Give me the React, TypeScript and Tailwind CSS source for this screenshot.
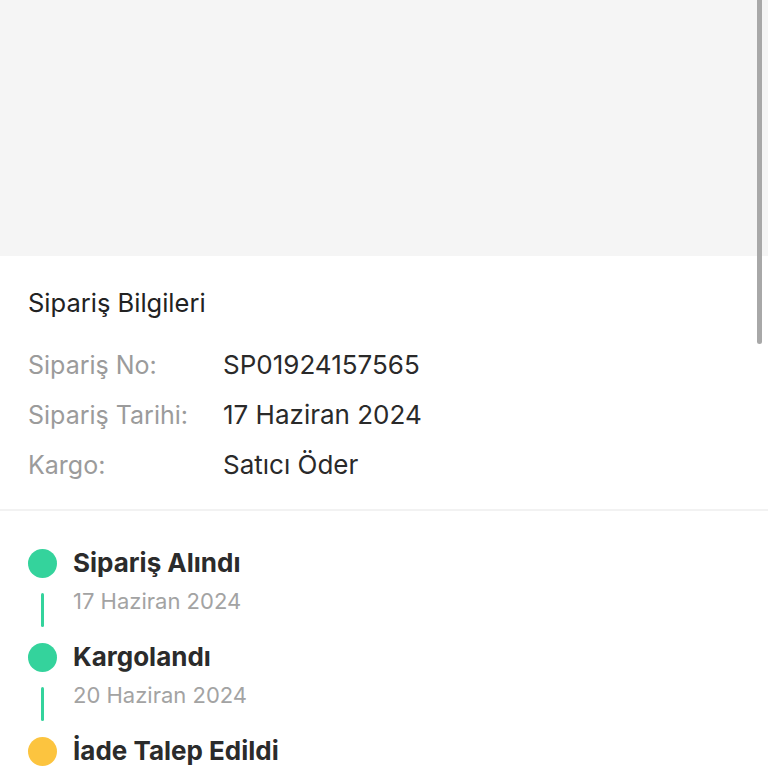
const rows = [
  { label: 'Sipariş No:', value: 'SP01924157565' },
  { label: 'Sipariş Tarihi:', value: '17 Haziran 2024' },
  { label: 'Kargo:', value: 'Satıcı Öder' },
];

const steps = [
  { title: 'Sipariş Alındı', date: '17 Haziran 2024', color: 'bg-[#34d39c]', line: true },
  { title: 'Kargolandı', date: '20 Haziran 2024', color: 'bg-[#34d39c]', line: true },
  { title: 'İade Talep Edildi', date: '24 Haziran 2024', color: 'bg-[#fcc43f]', line: false },
];

export default function App() {
  return (
    <div
      className="relative h-[768px] w-[768px] overflow-hidden bg-white"
      style={{ fontFamily: 'Inter, "Noto Sans", sans-serif' }}
    >
      {/* Image placeholder area */}
      <div className="h-[256px] bg-[#f5f5f5]" />

      {/* Order info */}
      <section className="px-[28px] pt-[31px] pb-[19px]">
        <h2 className="text-[25.5px] leading-[32px] text-[#222]">Sipariş Bilgileri</h2>
        <div className="mt-[21px]">
          {rows.map((r) => (
            <div key={r.label} className="flex items-baseline leading-[50px]">
              <span className="w-[195px] text-[25px] text-[#9b9b9b]">{r.label}</span>
              <span className="text-[26px] text-[#2a2a2a]">{r.value}</span>
            </div>
          ))}
        </div>
      </section>

      <div className="h-[2px] bg-[#f2f2f2]" />

      {/* Timeline */}
      <section className="flex flex-col gap-[14px] px-[28px] pt-[36px]">
        {steps.map((s) => (
          <div key={s.title} className="flex gap-[16px]">
            <div className="flex w-[29px] shrink-0 flex-col items-center">
              <div className={`mt-[2px] h-[29px] w-[29px] rounded-full ${s.color}`} />
              {s.line && <div className="mt-[15px] h-[34px] w-[3px] rounded-full bg-[#34d39c]" />}
            </div>
            <div className="flex flex-col">
              <span className="text-[26px] font-bold leading-[32px] text-[#2b2b2b]">{s.title}</span>
              <span className="mt-[8px] text-[22px] leading-[28px] text-[#a3a3a3]">{s.date}</span>
            </div>
          </div>
        ))}
      </section>

      {/* Scrollbar thumb */}
      <div className="absolute right-[6px] top-0 h-[344px] w-[5px] rounded-b-full bg-[#a8a8a8]" />
    </div>
  );
}
